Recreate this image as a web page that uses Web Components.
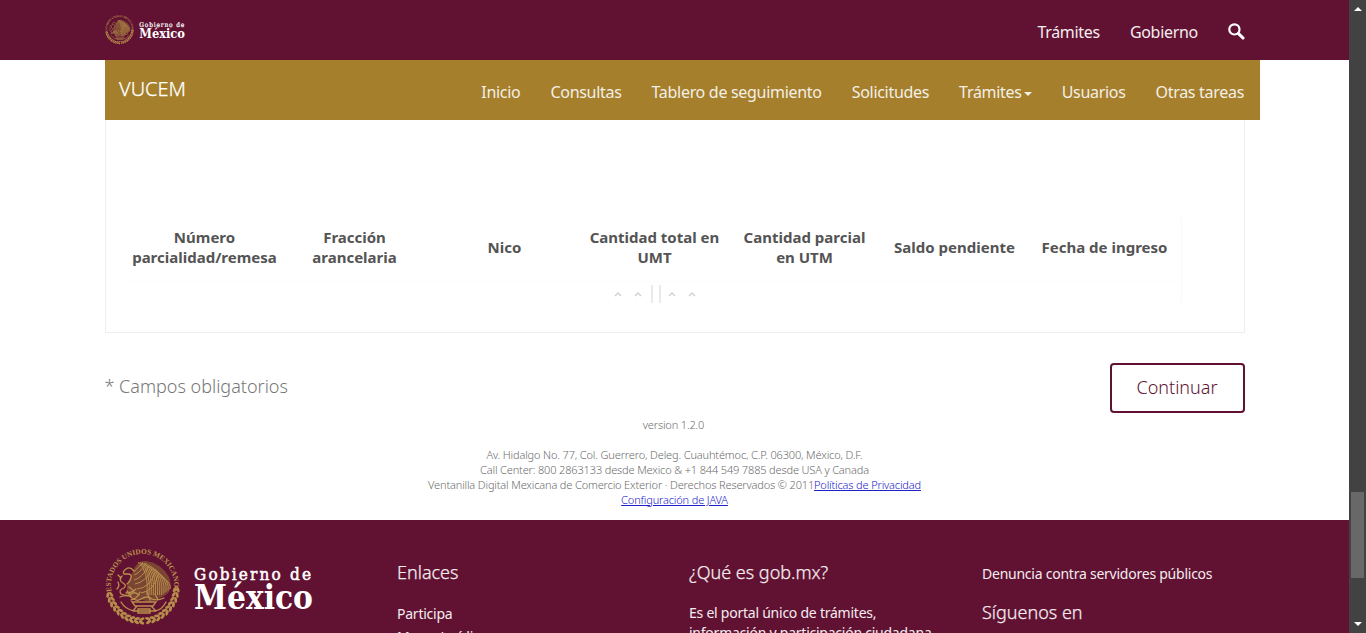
<!DOCTYPE html>
<html lang="es">
<head>
<meta charset="utf-8">
<title>VUCEM</title>
<style>
html,body{margin:0;height:100%;overflow:hidden;background:#fff}
body{font-family:"Noto Sans","Open Sans",sans-serif;font-weight:300;color:#777}
</style>
</head>
<body>
<vucem-app></vucem-app>
<script>
const define = (name, html) => customElements.define(name, class extends HTMLElement {
  constructor(){ super(); this.attachShadow({mode:'open'}).innerHTML = html; }
});

/* Wreath leaves and wing feathers of the national seal */
const polar = (r,a) => { const t=a*Math.PI/180; return [(37.5+r*Math.cos(t)).toFixed(1),(38+r*Math.sin(t)).toFixed(1)]; };
let leaves='';
for(let a=6;a<=174;a+=8.4){
  const [x,y]=polar(33.8,a), d=a<90?-1:1;
  leaves+=`<g transform="translate(${x} ${y}) rotate(${a+90})"><ellipse cx="0" cy="-2" rx="3" ry="1.5" transform="rotate(${d*28})"/><ellipse cx="0" cy="1.8" rx="2.9" ry="1.4" transform="rotate(${-d*24})"/></g>`;
}
let feathers='';
for(let i=0;i<12;i++){
  const x=40+i*2.1, top=13+i*i*.11;
  feathers+=`<path d="M${(x-7).toFixed(1)} ${top} Q${x+4} ${top+9} ${x+2} ${46-(i>7?(i-7)*1.5:0)}"/>`;
}
define('mx-logo', `<style>:host{display:block}svg{display:block;width:100%;height:100%;overflow:visible}</style>
<svg viewBox="0 0 208 76" fill="none">
 <defs><path id="arc" d="M6.6 43 A31.6 31.6 0 1 1 68.4 43"/></defs>
 <g fill="#b68d4b">${leaves}</g>
 <text font-family="Liberation Serif" font-weight="700" font-size="7.3" fill="#bb924c"><textPath href="#arc" startOffset="50%" text-anchor="middle">ESTADOS UNIDOS MEXICANOS</textPath></text>
 <path d="M29 20 Q33 11 41 12 Q56 14 64 28 Q69 42 59 47 L46 53 L28 49 Q19 43 23 33 Z" fill="#7b4534"/>
 <g stroke="#b9904c" stroke-width=".95" fill="none">${feathers}
  <path d="M38 14q-6 5-9 9m12-9q-6 10-12 12m15-9q-7 12-15 14m18-11q-6 13-17 15m20-12q-5 16-18 17m21-14q-4 16-17 18"/>
 </g>
 <g stroke="#b9904c" stroke-width="1.3" stroke-linecap="round" fill="none">
  <path d="M29 22q-4-5-8-2q-4 3-2 5l4 0q4 0 3 4q-1 4-4 6"/>
  <path d="M17 27q-4 4 1 7q4 2 1 5q-6 2-3 6q6 3 10 0q4-3 8 1M13 33q2 4-1 7m4-11l-3-3m11 12l5 4m-7 0l4 5"/>
  <path d="M31 40q-4 4-10 4m14-1q-3 7-9 8m16-8l3 8m5-6l3 6M15 48q8-3 12 1q5 4 9 1q6-4 11 0q5 2 12-1"/>
  <path d="M27 53h24l-3 4h-18zM32 57l-4 5m18-5l5 5M16 53q4 7 13 9h21q7-1 11-9M33 60h12v4H33z"/>
 </g>
 <circle cx="22" cy="22" r=".8" fill="#611232"/>
 <g font-family="DejaVu Serif Condensed,DejaVu Serif,serif" fill="#fff">
  <text x="89" y="30.6" font-size="17" font-stretch="condensed" textLength="117" stroke="#fff" stroke-width=".5">Gobierno de</text>
  <text x="89" y="60" font-size="33" font-weight="700" font-stretch="condensed" textLength="119" lengthAdjust="spacingAndGlyphs">México</text>
 </g>
</svg>`);

define('gob-header', `<style>
:host{display:flex;height:60px;background:#611232;color:#f4ecef;padding:0 104px 0 105px;justify-content:space-between;font-size:16px}
mx-logo{width:80px;height:29.4px;margin-top:15px}
nav{display:flex;gap:30px;align-items:center;height:64px;font-weight:400}
nav span{letter-spacing:-.3px;white-space:nowrap}
svg{width:17px;height:17px;display:block;margin-bottom:2px}
</style><mx-logo></mx-logo><nav><span>Trámites</span><span>Gobierno</span>
<svg viewBox="0 0 17 17" fill="none" stroke="#fff"><circle cx="6.4" cy="6.4" r="5.1" stroke-width="2.2"/><path d="M10.3 10.3L15 15" stroke-width="3.1" stroke-linecap="round"/></svg></nav>`);

define('vucem-nav', `<style>
:host{display:flex;box-sizing:border-box;height:60px;width:1155px;margin-left:105px;background:#a57f2c;color:#fff;padding:0 16px 0 14px;justify-content:space-between}
.brand{font-size:20px;line-height:58px;-webkit-text-stroke:.25px #fff}
nav{display:flex;gap:30px;line-height:64px;font-size:16px;letter-spacing:-.3px;font-weight:400;white-space:nowrap;opacity:.88}
i{display:inline-block;border:4px solid transparent;border-top-color:#fff;border-bottom:0;margin-left:2px;vertical-align:2px}
</style><span class="brand">VUCEM</span><nav><span>Inicio</span><span>Consultas</span><span>Tablero de seguimiento</span><span>Solicitudes</span><span>Trámites<i></i></span><span>Usuarios</span><span>Otras tareas</span></nav>`);

define('remesa-table', `<style>
:host{display:block;box-sizing:border-box;width:1140px;height:213px;margin-left:105px;border:1px solid #eee;border-top:0;padding:97px 0 0 24px}
.grid{width:1051px;height:86px;border-right:1px solid #f9f9f9}
.head{display:grid;grid-template-columns:repeat(7,150px);height:64px;border-bottom:1px solid #fcfcfc;align-items:center;text-align:center;font-weight:700;font-size:15px;line-height:20px;color:#545454}
.head span{padding:0 1px 4px 0}
.pager{display:flex;justify-content:center;align-items:center;height:18px;margin:3px 1px 0 0;color:#d0d0d0}
.pager svg{width:8px;height:5px;margin:0 6px}
.pager b{width:2px;height:18px;background:#eaeaea;margin:0 3px}
.pager b+b{margin-right:1px}
</style><div class="grid"><div class="head"><span>Número<br>parcialidad/remesa</span><span>Fracción<br>arancelaria</span><span>Nico</span><span>Cantidad total en<br>UMT</span><span>Cantidad parcial<br>en UTM</span><span>Saldo pendiente</span><span>Fecha de ingreso</span></div>
<div class="pager">${'<svg viewBox="0 0 8 5" fill="none" stroke="#d0d0d0" stroke-width="1.4"><path d="M1 4L4 1L7 4"/></svg>'.repeat(2)}<b></b><b></b>${'<svg viewBox="0 0 8 5" fill="none" stroke="#d0d0d0" stroke-width="1.4"><path d="M1 4L4 1L7 4"/></svg>'.repeat(2)}</div></div>`);

define('form-actions', `<style>
:host{display:flex;justify-content:space-between;width:1140.5px;margin:30px 0 0 104.5px;height:50px;font-size:18px;line-height:46px}
button{box-sizing:border-box;width:135px;height:50px;border:2px solid #611232;border-radius:4px;background:#fff;color:#611232;font:inherit;font-size:18px;line-height:24px;padding:0 1px 2px 0}
</style><span>* Campos obligatorios</span><button>Continuar</button>`);

define('site-info', `<style>
:host{display:block;text-align:center;font-size:11px;line-height:15px;letter-spacing:-.15px;height:103px;padding-top:4px;color:#6c6c6c}
p{margin:0 0 15px;white-space:nowrap}p:first-of-type{margin-right:2px}a{color:#1c22c8;text-decoration:underline}
</style><p>version 1.2.0</p><p>Av. Hidalgo No. 77, Col. Guerrero, Deleg. Cuauhtémoc, C.P. 06300, México, D.F.<br>Call Center: 800 2863133 desde Mexico &amp; +1 844 549 7885 desde USA y Canada<br>Ventanilla Digital Mexicana de Comercio Exterior · Derechos Reservados © 2011<a>Políticas de Privacidad</a><br><a>Configuración de JAVA</a></p>`);

define('gob-footer', `<style>
:host{display:grid;grid-template-columns:292px 292px 293px 263px;height:113px;overflow:hidden;background:#611232;color:#f4ecef;padding-left:105px;font-size:14px;font-weight:400}
mx-logo{width:208px;height:76px;margin-top:29px}
h5{margin:0;font-size:18px;font-weight:300;line-height:24px;letter-spacing:0;-webkit-text-stroke:.25px #f4ecef}
p{margin:0;line-height:18px;white-space:nowrap;letter-spacing:-.24px}
.c{padding-top:40px}.l p{margin-top:20px;line-height:20px}.l p+p{margin-top:3px}
.q p{margin-top:19px;line-height:20px}
.d{padding-top:45px}.d h5{margin-top:17px}
</style><mx-logo></mx-logo>
<div class="c l"><h5>Enlaces</h5><p>Participa</p><p>Marco Jurídico</p></div>
<div class="c q"><h5>¿Qué es gob.mx?</h5><p>Es el portal único de trámites,<br>información y participación ciudadana.</p></div>
<div class="d"><p>Denuncia contra servidores públicos</p><h5>Síguenos en</h5></div>`);

define('scroll-rail', `<style>
:host{display:grid;grid-template-rows:492px 86px 1fr;justify-items:center;box-sizing:border-box;width:17px;height:633px;background:#424242}
svg{display:block;width:8px;height:4px}.up{margin-top:7px}.thumb{width:13px;background:#686868}.down{align-self:end;margin-bottom:7px}
</style><svg class="up" viewBox="0 0 8 4"><path d="M4 0L8 4H0z" fill="#fff"/></svg><div class="thumb"></div><svg class="down" viewBox="0 0 8 4"><path d="M0 0H8L4 4z" fill="#fff"/></svg>`);

define('vucem-app', `<style>
:host{display:grid;grid-template-columns:1349px 17px;width:1366px;height:633px;overflow:hidden}
main{display:block;height:633px;overflow:hidden}
</style><main><gob-header></gob-header><vucem-nav></vucem-nav><remesa-table></remesa-table><form-actions></form-actions><site-info></site-info><gob-footer></gob-footer></main><scroll-rail></scroll-rail>`);
</script>
</body>
</html>
